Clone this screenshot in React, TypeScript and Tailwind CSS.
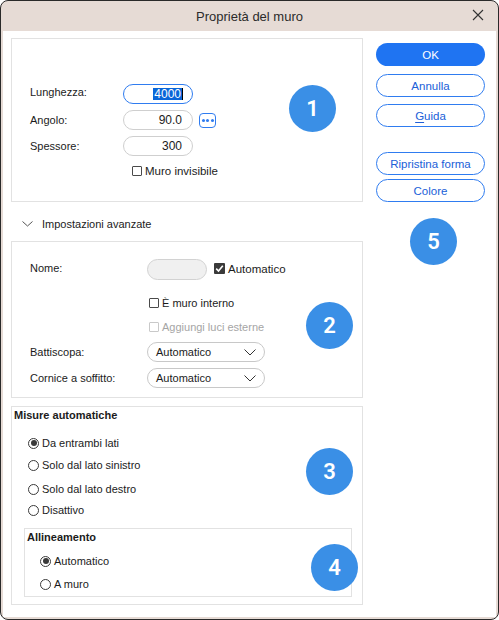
import React from "react";

const Badge = ({ n, className = "" }: { n: string; className?: string }) => (
  <div
    className={`w-[47px] h-[47px] rounded-full bg-[#3a8fe6] text-white flex items-center justify-center text-[22px] font-semibold ${className}`}
    style={{ fontFamily: "Roboto, 'Liberation Sans', sans-serif" }}
  >
    {n}
  </div>
);

const Check = ({ checked = false, disabled = false }: { checked?: boolean; disabled?: boolean }) => {
  if (checked)
    return (
      <div className="w-[11px] h-[11px] rounded-[1px] bg-[#3a3a3a] flex items-center justify-center">
        <svg width="9" height="9" viewBox="0 0 9 9">
          <path d="M1.2 4.6 L3.5 7 L7.8 1.8" fill="none" stroke="white" strokeWidth="1.6" />
        </svg>
      </div>
    );
  return (
    <div
      className={`w-[10px] h-[10px] rounded-[1px] border ${disabled ? "border-[#c9c9c9]" : "border-[#4a4a4a]"} bg-white`}
    />
  );
};

const Radio = ({ checked = false }: { checked?: boolean }) => (
  <div className="w-[11px] h-[11px] rounded-full border border-[#3a3a3a] flex items-center justify-center bg-white">
    {checked && <div className="w-[6px] h-[6px] rounded-full bg-[#3a3a3a]" />}
  </div>
);

const Chevron = ({ color = "#333", w = 12, h = 7 }: { color?: string; w?: number; h?: number }) => (
  <svg width={w} height={h} viewBox={`0 0 ${w} ${h}`}>
    <path d={`M0.5 0.5 L${w / 2} ${h - 1} L${w - 0.5} 0.5`} fill="none" stroke={color} strokeWidth="1" />
  </svg>
);

const Select = () => (
  <div className="w-[118px] h-[20px] rounded-full border border-[#c8c8c8] flex items-center pl-[8px] pr-[8px] justify-between">
    <span>Automatico</span>
    <Chevron />
  </div>
);

const Btn = ({ children, primary = false, className = "" }: { children: React.ReactNode; primary?: boolean; className?: string }) => (
  <div
    className={`w-[109px] h-[23px] rounded-full flex items-center justify-center ${
      primary ? "bg-[#1f74f2] text-white" : "border border-[#2f7cf0] text-[#2060d8] bg-white"
    } ${className}`}
  >
    {children}
  </div>
);

const RadioRow = ({ label, checked = false, className = "" }: { label: string; checked?: boolean; className?: string }) => (
  <div className={`h-[14px] flex items-center gap-[3px] ${className}`}>
    <Radio checked={checked} />
    <span>{label}</span>
  </div>
);

export default function App() {
  return (
    <div
      className="w-[499px] h-[620px] bg-[#e6dbd5] border border-[#2a2a2a] rounded-[8px] overflow-hidden flex flex-col text-[11px] text-[#1b1b1b] leading-[14px]"
      style={{ fontFamily: "'Liberation Sans', Arial, sans-serif" }}
    >
      {/* Title bar */}
      <div className="h-[30px] shrink-0 relative flex items-center justify-center text-[13px] text-[#2b2b2b]">
        <span className="mt-[2px]">Proprietà del muro</span>
        <svg className="absolute right-[14px] top-[8px]" width="12" height="12" viewBox="0 0 12 12">
          <path d="M1 1 L11 11 M11 1 L1 11" stroke="#333" strokeWidth="1.1" fill="none" />
        </svg>
      </div>

      {/* Body */}
      <div className="flex-1 bg-white mx-[2px] mb-[2px] flex pl-[8px]">
        {/* Left column */}
        <div className="w-[352px] pt-[7px] flex flex-col">
          {/* Section 1 */}
          <div className="h-[164px] border border-[#e2e2e2] relative pl-[18px] pt-[45px]">
            <div className="flex flex-col gap-[6px]">
              <div className="flex items-center">
                <div className="w-[93px] -mt-[4px]">Lunghezza:</div>
                <div className="w-[70px] h-[20px] rounded-full border border-[#2f7cf0] flex items-center justify-end pr-[9px] text-[12px]">
                  <span className="bg-[#0a66d8] text-white px-[1px] leading-[12px]">4000</span>
                  <span className="w-[1px] h-[12px] bg-black" />
                </div>
              </div>
              <div className="flex items-center">
                <div className="w-[93px] -mt-[1px]">Angolo:</div>
                <div className="w-[70px] h-[20px] rounded-full border border-[#cfcfcf] flex items-center justify-end pr-[10px] text-[12px]">
                  90.0
                </div>
                <div className="ml-[6px] w-[17px] h-[15px] rounded-[4px] border border-[#2f7cf0] flex items-center justify-center gap-[1.5px]">
                  <span className="w-[3px] h-[3px] rounded-full bg-[#2f7cf0]" />
                  <span className="w-[3px] h-[3px] rounded-full bg-[#2f7cf0]" />
                  <span className="w-[3px] h-[3px] rounded-full bg-[#2f7cf0]" />
                </div>
              </div>
              <div className="flex items-center">
                <div className="w-[93px] -mt-[1px]">Spessore:</div>
                <div className="w-[70px] h-[20px] rounded-full border border-[#cfcfcf] flex items-center justify-end pr-[10px] text-[12px]">
                  300
                </div>
              </div>
            </div>
            <div className="h-[14px] mt-[8px] ml-[102px] flex items-center gap-[3px]">
              <Check />
              <span className="text-[11.5px]">Muro invisibile</span>
            </div>
            <Badge n="1" className="absolute left-[277px] top-[46px]" />
          </div>

          {/* Advanced header */}
          <div className="h-[39px] flex items-center pl-[11px] pt-[5px] gap-[9px]">
            <Chevron color="#555" w={11} h={6} />
            <span>Impostazioni avanzate</span>
          </div>

          {/* Section 2 */}
          <div className="h-[157px] border border-[#e2e2e2] relative pl-[18px] pt-[17px]">
            <div className="flex items-center h-[21px]">
              <div className="w-[117px] -mt-[4px]">Nome:</div>
              <div className="w-[60px] h-[21px] rounded-full border border-[#d2d2d2] bg-[#f0f0f0]" />
              <div className="ml-[7px] flex items-center gap-[3px] -mt-[2px]">
                <Check checked />
                <span className="text-[11.5px]">Automatico</span>
              </div>
            </div>
            <div className="h-[14px] mt-[16px] ml-[119px] flex items-center gap-[3px]">
              <Check />
              <span>È muro interno</span>
            </div>
            <div className="h-[14px] mt-[10px] ml-[119px] flex items-center gap-[3px] text-[#a5a5a5]">
              <Check disabled />
              <span>Aggiungi luci esterne</span>
            </div>
            <div className="flex items-center mt-[8px]">
              <div className="w-[117px]">Battiscopa:</div>
              <Select />
            </div>
            <div className="flex items-center mt-[6px]">
              <div className="w-[117px]">Cornice a soffitto:</div>
              <Select />
            </div>
            <Badge n="2" className="absolute left-[294px] top-[60px]" />
          </div>

          {/* Section 3 */}
          <div className="h-[199px] mt-[8px] border border-[#e2e2e2] relative pl-[2px] pt-[1px]">
            <div className="font-bold h-[14px]">Misure automatiche</div>
            <div className="pl-[14px]">
              <RadioRow label="Da entrambi lati" checked className="mt-[14px]" />
              <RadioRow label="Solo dal lato sinistro" className="mt-[8px]" />
              <RadioRow label="Solo dal lato destro" className="mt-[10px]" />
              <RadioRow label="Disattivo" className="mt-[7px]" />
            </div>
            <div className="ml-[10px] w-[328px] h-[69px] mt-[11px] border border-[#e2e2e2] relative pl-[2px] pt-[1px]">
              <div className="font-bold h-[14px]">Allineamento</div>
              <div className="pl-[13px]">
                <RadioRow label="Automatico" checked className="mt-[10px]" />
                <RadioRow label="A muro" className="mt-[9px]" />
              </div>
              <Badge n="4" className="absolute left-[286px] top-[15px]" />
            </div>
            <Badge n="3" className="absolute left-[294px] top-[41px]" />
          </div>
        </div>

        {/* Right column */}
        <div className="ml-[13px] pt-[12px] flex flex-col text-[11.5px]">
          <Btn primary>OK</Btn>
          <Btn className="mt-[8px]">Annulla</Btn>
          <Btn className="mt-[7px]">
            <span>
              <span className="underline underline-offset-2">G</span>uida
            </span>
          </Btn>
          <Btn className="mt-[25px]">Ripristina forma</Btn>
          <Btn className="mt-[4px]">Colore</Btn>
          <Badge n="5" className="mt-[16px] ml-[34px]" />
        </div>
      </div>
    </div>
  );
}
